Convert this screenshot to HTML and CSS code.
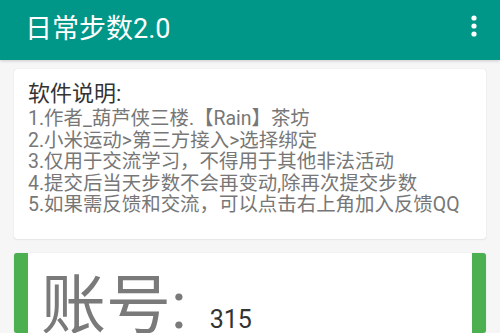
FILE: index.html
```html
<!DOCTYPE html>
<html lang="zh-CN">
<head>
<meta charset="utf-8">
<title>日常步数2.0</title>
<link rel="stylesheet" href="styles.css">
</head>
<body>
<header class="toolbar">
  <h1 class="toolbar-title">日常步数2.0</h1>
  <button class="menu-btn" aria-label="更多">
    <svg width="6" height="22" viewBox="0 0 6 22"><circle cx="3" cy="3" r="2.6" fill="#fff"/><circle cx="3" cy="11" r="2.6" fill="#fff"/><circle cx="3" cy="19" r="2.6" fill="#fff"/></svg>
  </button>
</header>
<main class="content">
  <section class="card info-card">
    <h2 class="info-title">软件说明:</h2>
    <p class="info-line">1.作者_葫芦侠三楼.【Rain】茶坊</p>
    <p class="info-line">2.小米运动&gt;第三方接入&gt;选择绑定</p>
    <p class="info-line">3.仅用于交流学习，不得用于其他非法活动</p>
    <p class="info-line">4.提交后当天步数不会再变动,除再次提交步数</p>
    <p class="info-line">5.如果需反馈和交流，可以点击右上角加入反馈QQ</p>
  </section>
  <section class="card account-card">
    <div class="account-row">
      <span class="account-label">账号:</span><span class="account-value">315</span>
    </div>
  </section>
</main>
</body>
</html>
```

FILE: styles.css
```css
html, body {
  margin: 0;
  padding: 0;
}
body {
  width: 500px;
  height: 333px;
  overflow: hidden;
  background: #f6f6f6;
  font-family: Roboto, "Noto Sans CJK SC", sans-serif;
}
.toolbar {
  height: 60px;
  background: #009688;
  display: flex;
  align-items: center;
  justify-content: space-between;
  padding: 0 23px 0 25px;
  box-sizing: border-box;
  box-shadow: 0 1px 3px rgba(0,0,0,0.18);
  position: relative;
  z-index: 1;
}
.toolbar-title {
  margin: 0;
  color: #fff;
  font-weight: 400;
  font-size: 27px;
  line-height: 30px;
  padding-bottom: 2px;
}
.menu-btn {
  border: 0;
  background: none;
  padding: 0;
  width: 6px;
  height: 22px;
  display: block;
  margin-bottom: 8px;
}
.menu-btn svg { display: block; }
.content {
  padding: 9px 14px;
  display: flex;
  flex-direction: column;
  gap: 14px;
}
.card {
  background: #fff;
  border-radius: 3px;
  box-shadow: 0 0 1px rgba(0,0,0,0.18), 0 1px 2px rgba(0,0,0,0.06);
}
.info-card {
  height: 170px;
  box-sizing: border-box;
  padding: 11px 14px 0 14px;
}
.info-title {
  margin: 0 0 1px;
  font-size: 22px;
  line-height: 27px;
  font-weight: 400;
  color: #333;
}
.info-line {
  margin: 0;
  font-size: 19.45px;
  line-height: 21.5px;
  color: #777;
  white-space: nowrap;
}
.account-card {
  height: 80px;
  border-left: 14px solid #4caf50;
  border-right: 14px solid #4caf50;
}
.account-row {
  padding: 18px 0 0 13px;
  white-space: nowrap;
}
.account-label {
  font-size: 65px;
  line-height: 70px;
  color: #7a7a7a;
}
.account-value {
  font-size: 25px;
  color: #333;
  margin-left: 23px;
}
```
